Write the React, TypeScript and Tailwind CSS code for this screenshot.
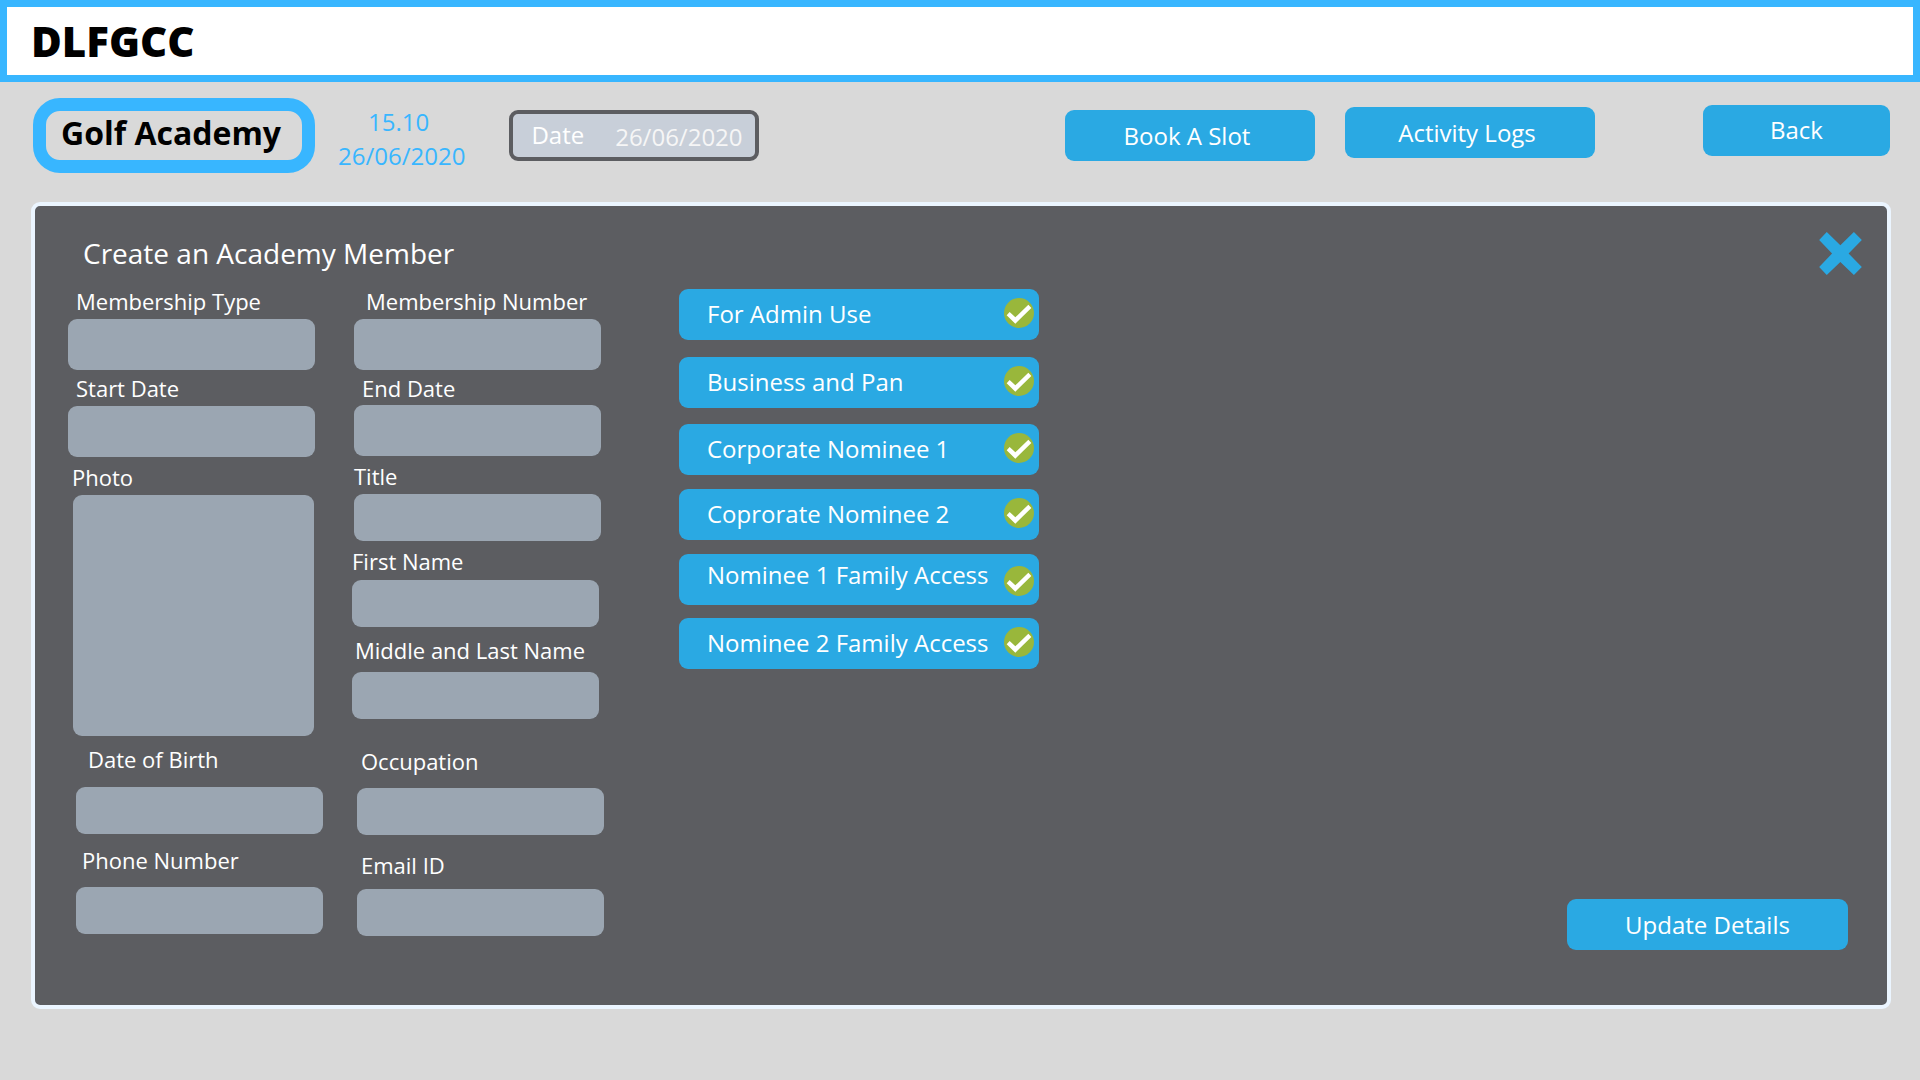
import type { ReactNode } from 'react';

type FieldProps = {
  id: string;
  label: string;
  /** Space above the field and its horizontal inset in the column. */
  className?: string;
  /** Inset of the label and the gap to its box. */
  labelClass: string;
  boxClass?: string;
};

function Field({ id, label, className = '', labelClass, boxClass = 'h-[47px] w-[247px]' }: FieldProps) {
  return (
    <div className={`flex flex-col items-start ${className}`}>
      <label htmlFor={id} className={`whitespace-nowrap text-[22px] leading-[30px] text-white ${labelClass}`}>
        {label}
      </label>
      <input
        id={id}
        type="text"
        className={`rounded-[9px] bg-[#9ba6b2] px-3 text-[22px] text-white outline-none ${boxClass}`}
      />
    </div>
  );
}

function PhotoField() {
  return (
    <div className="mt-[5px] flex flex-col items-start pl-[5px]">
      <span id="photo-label" className="-ml-px mb-[3px] text-[22px] leading-[30px] text-white">
        Photo
      </span>
      <button type="button" aria-labelledby="photo-label" className="h-[241px] w-[241px] rounded-[9px] bg-[#9ba6b2]" />
    </div>
  );
}

function ActionButton({ className, children }: { className: string; children: ReactNode }) {
  return (
    <button
      type="button"
      className={`flex h-[51px] shrink-0 items-center justify-center rounded-[9px] bg-[#2aa9e3] text-[24px] leading-[34px] text-white ${className}`}
    >
      {children}
    </button>
  );
}

function CheckBadge() {
  return (
    <svg viewBox="0 0 90 90" className="h-[30px] w-[30px] shrink-0" aria-hidden="true">
      <circle cx="45" cy="45" r="45" fill="#99b73b" />
      <path d="M8 52 17 42 34 58 73 20 82 30 34 77Z" fill="#fff" />
    </svg>
  );
}

const sections = [
  { name: 'For Admin Use', card: '', text: 'pb-0.5', badge: 'pb-[3px]' },
  { name: 'Business and Pan', card: 'mt-[17px]', text: 'pb-0.5', badge: 'pb-[3px]' },
  { name: 'Corporate Nominee 1', card: 'mt-4', text: 'pb-0.5', badge: 'pb-[3px]' },
  { name: 'Coprorate Nominee 2', card: 'mt-[14px]', text: 'pb-0.5', badge: 'pb-[3px]' },
  { name: 'Nominee 1 Family Access', card: 'mt-[14px]', text: 'pb-2.5', badge: 'pt-[3px]' },
  { name: 'Nominee 2 Family Access', card: 'mt-[13px]', text: 'pb-0.5', badge: 'pb-[3px]' },
];

export default function App() {
  return (
    <div className="flex min-h-screen flex-col bg-[#d9d9d9] font-['Open_Sans',sans-serif]">
      <header className="flex h-[82px] items-center border-[7px] border-[#38b6ff] bg-white pl-6">
        <h1 className="text-[42px] font-extrabold leading-[58px] text-black">DLFGCC</h1>
      </header>

      <div className="flex items-start pl-[33px] pr-[30px] pt-4">
        <h2 className="flex h-[75px] w-[282px] shrink-0 items-center justify-center rounded-[27px] border-[13px] border-[#38b6ff] pb-1.5 pr-1.5 text-[32px] font-bold leading-[44px] text-black">
          Golf Academy
        </h2>
        <div className="ml-[23px] mt-[7px] shrink-0 text-center text-[24px] leading-[34px] text-[#38b6ff]">
          <p className="pr-1.5">15.10</p>
          <p>26/06/2020</p>
        </div>
        <div className="ml-[44px] mt-3 flex h-[51px] w-[250px] shrink-0 items-center rounded-[9px] border-[4px] border-[#5c5d61] bg-[#c8cfd9] pb-0.5 pl-[18px] text-[24px] text-white">
          <label htmlFor="date" className="leading-[34px]">
            Date
          </label>
          <input
            id="date"
            type="text"
            defaultValue="26/06/2020"
            className="ml-[31px] mt-1 w-[132px] bg-transparent leading-[34px] text-[#f6f6f6] outline-none"
          />
        </div>
        <nav className="ml-auto flex items-start">
          <ActionButton className="mt-3 w-[250px] pr-1.5">Book A Slot</ActionButton>
          <ActionButton className="ml-[30px] mt-[9px] w-[250px] pr-1.5">Activity Logs</ActionButton>
          <ActionButton className="ml-[108px] mt-[7px] w-[187px] pb-0.5">Back</ActionButton>
        </nav>
      </div>

      <main className="mb-[71px] ml-[31px] mr-[29px] mt-[29px] flex grow flex-col rounded-[9px] border-[4px] border-[#ebf5ff] bg-[#5c5d61] pb-[55px] pl-[33px] pr-[39px] pt-[26px]">
        <div className="flex h-[54px] items-start justify-between pl-[15px]">
          <h3 className="pt-px text-[28px] leading-[40px] text-white">Create an Academy Member</h3>
          <button type="button" aria-label="Close" className="-mr-[14px]">
            <svg viewBox="57 50 129 130" className="h-[43px] w-[43px]" aria-hidden="true">
              <path d="M80 50 121 90 162 50 186 74 146 115 186 156 162 180 121 141 80 180 57 156 96 115 57 74Z" fill="#2aa9e3" />
            </svg>
          </button>
        </div>

        <form className="flex grow items-start">
          <div className="flex w-[284px] shrink-0 flex-col">
            <Field id="membership-type" label="Membership Type" labelClass="ml-2 mb-[3px]" boxClass="h-[51px] w-[247px]" />
            <Field id="start-date" label="Start Date" className="mt-[3px]" labelClass="ml-2 mb-[3px]" boxClass="h-[51px] w-[247px]" />
            <PhotoField />
            <Field id="birth" label="Date of Birth" className="mt-2 pl-2" labelClass="ml-3 mb-[13px]" />
            <Field id="phone" label="Phone Number" className="mt-[11px] pl-2" labelClass="ml-1.5 mb-[12px]" />
          </div>

          <div className="flex w-[327px] shrink-0 flex-col pl-0.5">
            <Field id="membership-number" label="Membership Number" labelClass="ml-3 mb-[3px]" boxClass="h-[51px] w-[247px]" />
            <Field id="end-date" label="End Date" className="mt-[3px]" labelClass="ml-2 mb-0.5" boxClass="h-[51px] w-[247px]" />
            <Field id="title" label="Title" className="mt-[5px]" labelClass="mb-[3px]" />
            <Field id="first-name" label="First Name" className="-ml-0.5 mt-[5px]" labelClass="mb-1" />
            <Field id="last-name" label="Middle and Last Name" className="-ml-0.5 mt-2" labelClass="ml-[3px] mb-[7px]" />
            <Field id="occupation" label="Occupation" className="ml-[3px] mt-[27px]" labelClass="ml-1 mb-3" />
            <Field id="email" label="Email ID" className="ml-[3px] mt-[15px]" labelClass="ml-1 mb-[9px]" />
          </div>

          <div className="flex w-[360px] shrink-0 flex-col pt-[3px]">
            {sections.map((s) => (
              <button
                key={s.name}
                type="button"
                className={`flex h-[51px] items-center justify-between rounded-[9px] bg-[#2aa9e3] pl-7 pr-[5px] text-[24px] leading-[34px] text-white ${s.card}`}
              >
                <span className={s.text}>{s.name}</span>
                <span className={s.badge}>
                  <CheckBadge />
                </span>
              </button>
            ))}
          </div>

          <ActionButton className="ml-auto w-[281px] self-end">Update Details</ActionButton>
        </form>
      </main>
    </div>
  );
}
